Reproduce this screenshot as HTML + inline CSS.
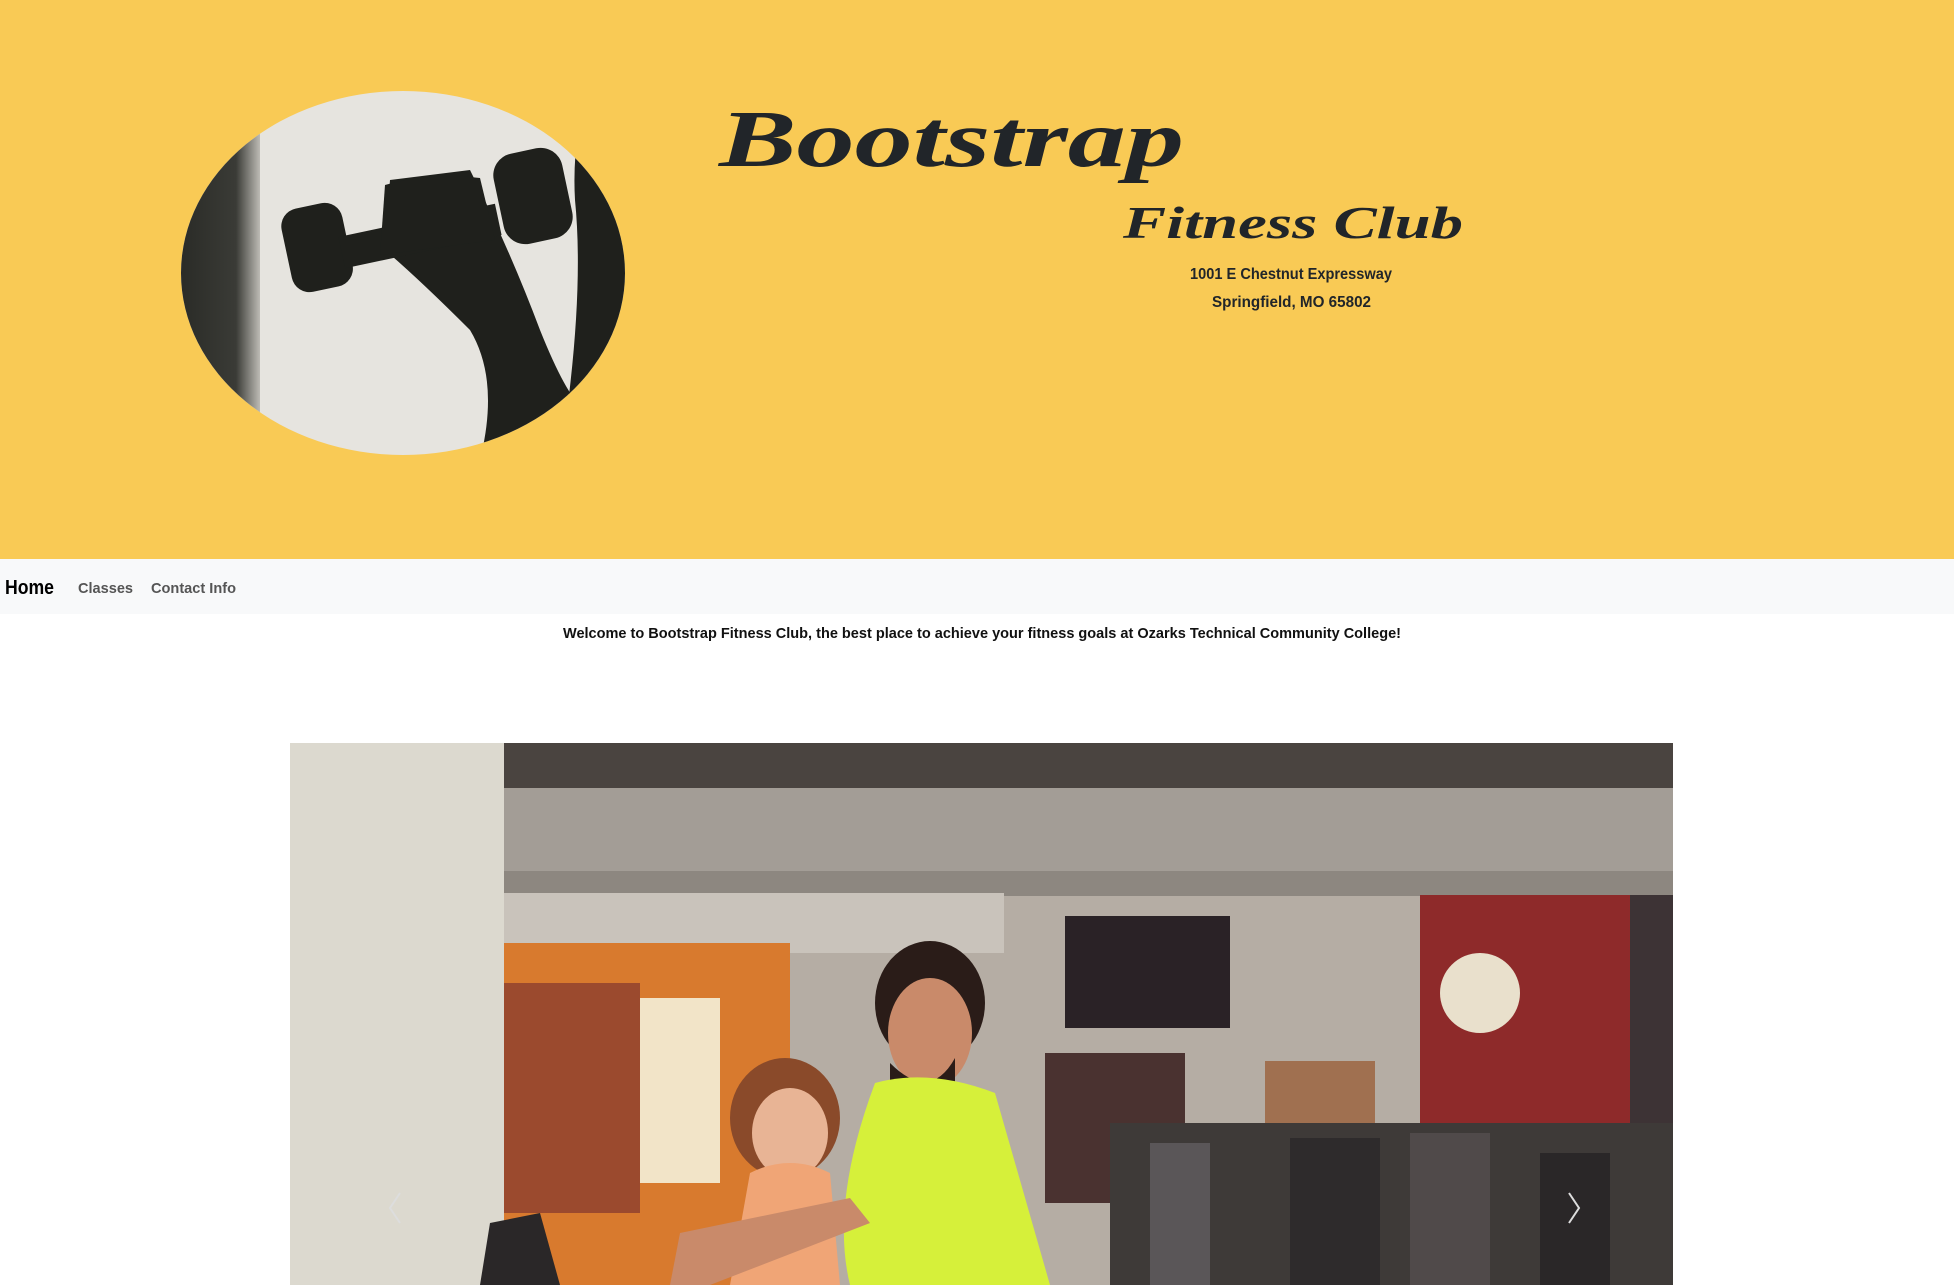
<!DOCTYPE html>
<html><head><meta charset="utf-8"><style>
html,body{margin:0;padding:0;background:#fff;width:1954px;height:1285px;overflow:hidden;font-family:"Liberation Sans",sans-serif}
.hdr{position:absolute;left:0;top:0;width:1954px;height:559px;background:#f9ca55}
.nav{position:absolute;left:0;top:559px;width:1954px;height:55px;background:#f8f9fa}
svg{position:absolute;left:0;top:0}
</style></head><body>
<div class="hdr"></div>
<div class="nav"></div>
<svg width="1954" height="1285" viewBox="0 0 1954 1285">
<defs>
<clipPath id="ec"><ellipse cx="403" cy="273" rx="222" ry="182"/></clipPath>
<clipPath id="pc"><rect x="290" y="743" width="1383" height="542"/></clipPath>
<linearGradient id="lg" x1="0" x2="1"><stop offset="0" stop-color="#2a2b27"/><stop offset=".7" stop-color="#3a3b36"/><stop offset="1" stop-color="#bdbbb5"/></linearGradient>
</defs>
<g clip-path="url(#ec)">
<rect x="180" y="90" width="450" height="370" fill="#e6e4df"/>
<rect x="180" y="90" width="80" height="370" fill="url(#lg)"/>
<path d="M585 90 L630 90 L630 460 L560 460 Q585 300 575 200 Q572 150 585 90 Z" fill="#1f201c"/>
<path d="M390 180 L470 170 Q510 250 540 330 Q560 380 575 400 L560 460 L480 460 Q500 380 470 330 Q420 280 385 250 Z" fill="#1f201c"/>
<rect x="286" y="205" width="62" height="85" rx="18" fill="#1f201c" transform="rotate(-12 317 247)"/>
<rect x="340" y="220" width="160" height="32" fill="#1f201c" transform="rotate(-12 420 236)"/>
<rect x="498" y="150" width="70" height="92" rx="22" fill="#1f201c" transform="rotate(-12 533 196)"/>
<path d="M385 185 Q430 172 480 178 L495 240 L380 255 Z" fill="#1f201c"/>
</g>
<text x="719" y="166" textLength="465" lengthAdjust="spacingAndGlyphs" font-family="Liberation Serif" font-style="italic" font-weight="bold" font-size="80" fill="#212529">Bootstrap</text>
<text x="1123" y="238" textLength="340" lengthAdjust="spacingAndGlyphs" font-family="Liberation Serif" font-style="italic" font-weight="bold" font-size="46" fill="#212529">Fitness Club</text>
<text x="1190" y="279" textLength="202" lengthAdjust="spacingAndGlyphs" font-family="Liberation Sans" font-weight="bold" font-size="16" fill="#212529">1001 E Chestnut Expressway</text>
<text x="1212" y="307" textLength="159" lengthAdjust="spacingAndGlyphs" font-family="Liberation Sans" font-weight="bold" font-size="16" fill="#212529">Springfield, MO 65802</text>
<text x="5" y="594" textLength="49" lengthAdjust="spacingAndGlyphs" font-weight="bold" font-size="20" fill="#000">Home</text>
<text x="78" y="593" textLength="55" lengthAdjust="spacingAndGlyphs" font-weight="bold" font-size="15" fill="#555">Classes</text>
<text x="151" y="593" textLength="85" lengthAdjust="spacingAndGlyphs" font-weight="bold" font-size="15" fill="#555">Contact Info</text>
<text x="563" y="638" textLength="838" lengthAdjust="spacingAndGlyphs" font-weight="bold" font-size="15" fill="#111">Welcome to Bootstrap Fitness Club, the best place to achieve your fitness goals at Ozarks Technical Community College!</text>
<g clip-path="url(#pc)"><g transform="translate(290 743)">
<rect width="1383" height="542" fill="#b5ada4"/>
<rect x="214" y="0" width="1169" height="48" fill="#4a4440"/>
<rect x="214" y="45" width="1169" height="85" fill="#a39d96"/>
<rect x="214" y="128" width="1169" height="25" fill="#8d8780"/>
<rect x="214" y="150" width="500" height="60" fill="#c9c3bb"/>
<rect x="210" y="200" width="290" height="342" fill="#d87a2e"/>
<rect x="210" y="240" width="140" height="230" fill="#9b4a2e"/>
<rect x="350" y="255" width="80" height="185" fill="#f2e4c8"/>
<rect x="1130" y="152" width="210" height="290" fill="#8e2a2a"/>
<rect x="1340" y="152" width="43" height="390" fill="#3d3335"/>
<rect x="775" y="173" width="165" height="112" fill="#2a2226"/>
<circle cx="1190" cy="250" r="40" fill="#e9e0cc"/>
<rect x="755" y="310" width="140" height="150" fill="#4a3230"/>
<rect x="975" y="318" width="110" height="140" fill="#a07050"/>
<rect x="820" y="380" width="563" height="162" fill="#3e3a38"/>
<rect x="860" y="400" width="60" height="142" fill="#5a5658"/>
<rect x="1000" y="395" width="90" height="147" fill="#2e2b2c"/>
<rect x="1120" y="390" width="80" height="152" fill="#504a4a"/>
<rect x="1250" y="410" width="70" height="132" fill="#2a2728"/>
<rect x="0" y="0" width="214" height="542" fill="#dcd9cf"/>
<ellipse cx="495" cy="375" rx="55" ry="60" fill="#8a4a2a"/>
<ellipse cx="500" cy="390" rx="38" ry="45" fill="#e8b495"/>
<path d="M460 430 Q500 410 540 430 L550 542 L440 542 Z" fill="#f0a576"/>
<ellipse cx="640" cy="260" rx="55" ry="62" fill="#2a1c18"/>
<ellipse cx="640" cy="290" rx="42" ry="55" fill="#c98a6a"/>
<path d="M600 320 Q640 360 665 315 L665 340 Q640 375 600 340 Z" fill="#2a1c18"/>
<path d="M585 340 Q640 325 705 350 L760 542 L560 542 Q540 460 585 340 Z" fill="#d6f03a"/>
<path d="M390 490 L560 455 L580 480 L420 542 L380 542 Z" fill="#c98a6a"/>
<path d="M190 542 L200 480 L250 470 L270 542 Z" fill="#2a2728"/>
<path d="M110 450 L100 465 L110 480" stroke="#ddd" stroke-width="2" fill="none"/>
<path d="M1279 450 L1289 465 L1279 480" stroke="#ddd" stroke-width="2" fill="none"/>
</g></g>
</svg>
</body></html>
